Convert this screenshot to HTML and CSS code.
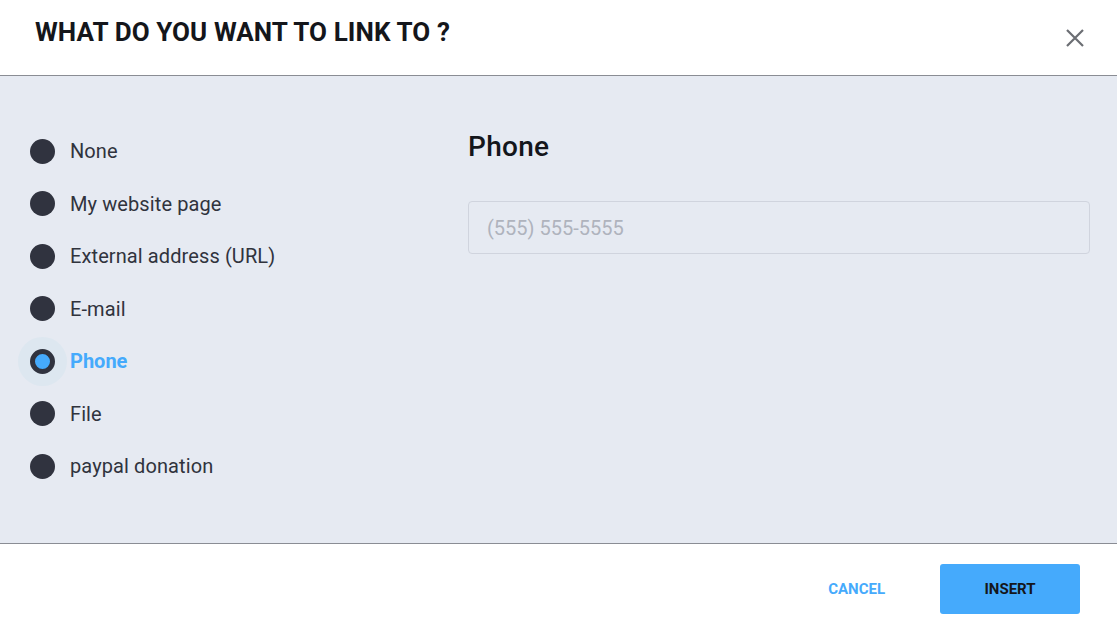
FILE: index.html
```html
<!DOCTYPE html>
<html lang="en">
<head>
    <meta charset="UTF-8">
    <title>Link dialog</title>
    <link rel="stylesheet" href="styles.css">
</head>
<body>

    <div class="dialog">
        <!-- Header -->
        <div class="dialog-header">
            <h1>WHAT DO YOU WANT TO LINK TO ?</h1>
            <button class="close-btn" aria-label="Close">
                <svg width="18" height="18" viewBox="0 0 18 18">
                    <path d="M1 1 L17 17 M17 1 L1 17" stroke="#6b6e73" stroke-width="2.2" fill="none"/>
                </svg>
            </button>
        </div>

        <!-- Body -->
        <div class="dialog-body">
            <ul class="link-options">
                <li class="option"><span class="radio"></span>None</li>
                <li class="option"><span class="radio"></span>My website page</li>
                <li class="option"><span class="radio"></span>External address (URL)</li>
                <li class="option"><span class="radio"></span>E-mail</li>
                <li class="option selected"><span class="radio"></span>Phone</li>
                <li class="option"><span class="radio"></span>File</li>
                <li class="option"><span class="radio"></span>paypal donation</li>
            </ul>

            <div class="link-details">
                <h2>Phone</h2>
                <input type="text" class="phone-input" placeholder="(555) 555-5555">
            </div>
        </div>

        <!-- Footer -->
        <div class="dialog-footer">
            <button class="btn-cancel">CANCEL</button>
            <button class="btn-insert">INSERT</button>
        </div>
    </div>

</body>
</html>
```

FILE: styles.css
```css
body {
    margin: 0;
    font-family: Roboto, "Noto Sans", sans-serif;
    background: #ffffff;
}
.dialog {
    width: 1117px;
    height: 627px;
    display: flex;
    flex-direction: column;
}
.dialog-header {
    height: 76px;
    border-bottom: 1px solid #8a8d94;
    display: flex;
    justify-content: space-between;
    align-items: flex-start;
    padding: 0 33px 0 35px;
    box-sizing: border-box;
}
h1 {
    margin: 17px 0 0;
    font-size: 26px;
    font-weight: 700;
    color: #14161b;
    letter-spacing: 0.1px;
}
.close-btn {
    background: none;
    border: none;
    padding: 0;
    margin-top: 29px;
    cursor: pointer;
}
.dialog-body {
    height: 468px;
    background: #e6eaf2;
    border-bottom: 1px solid #8a8d94;
    display: flex;
    box-sizing: border-box;
}
.link-options {
    list-style: none;
    margin: 0;
    padding: 49px 0 0 30px;
    width: 438px;
    box-sizing: border-box;
}
.option {
    display: flex;
    align-items: center;
    height: 52.5px;
    font-size: 20px;
    letter-spacing: 0.1px;
    color: #30333d;
}
.radio {
    width: 25px;
    height: 25px;
    border-radius: 50%;
    background: #30333f;
    margin-right: 15px;
    flex-shrink: 0;
    box-sizing: border-box;
}
.option.selected {
    color: #45aafc;
    font-weight: 700;
    letter-spacing: 0;
}
/* ring + soft halo on the selected radio */
.option.selected .radio {
    background: #45aafc;
    border: 5px solid #30333f;
    box-shadow: 0 0 0 12px #dde7f0;
}
.link-details {
    flex: 1;
    padding: 54px 27px 0 30px;
}
h2 {
    margin: 0 0 38px;
    font-size: 28px;
    font-weight: 500;
    color: #14161b;
    letter-spacing: 0.3px;
}
.phone-input {
    display: block;
    width: 100%;
    height: 53px;
    box-sizing: border-box;
    border: 1px solid #d0d4de;
    border-radius: 4px;
    background: #e6eaf2;
    padding: 0 18px;
    font-family: Roboto, sans-serif;
    font-size: 20px;
    outline: none;
}
.phone-input::placeholder {
    color: #afb3bd;
}
.dialog-footer {
    flex: 1;
    display: flex;
    justify-content: flex-end;
    align-items: center;
    padding: 7px 37px 0 0;
    gap: 55px;
}
button {
    font-family: Roboto, sans-serif;
}
.btn-cancel {
    background: none;
    border: none;
    padding: 0;
    color: #45aafc;
    font-size: 15px;
    font-weight: 700;
    cursor: pointer;
}
.btn-insert {
    width: 140px;
    height: 50px;
    background: #45aafc;
    border: none;
    border-radius: 3px;
    color: #14161b;
    font-size: 15px;
    font-weight: 700;
    cursor: pointer;
}
```
